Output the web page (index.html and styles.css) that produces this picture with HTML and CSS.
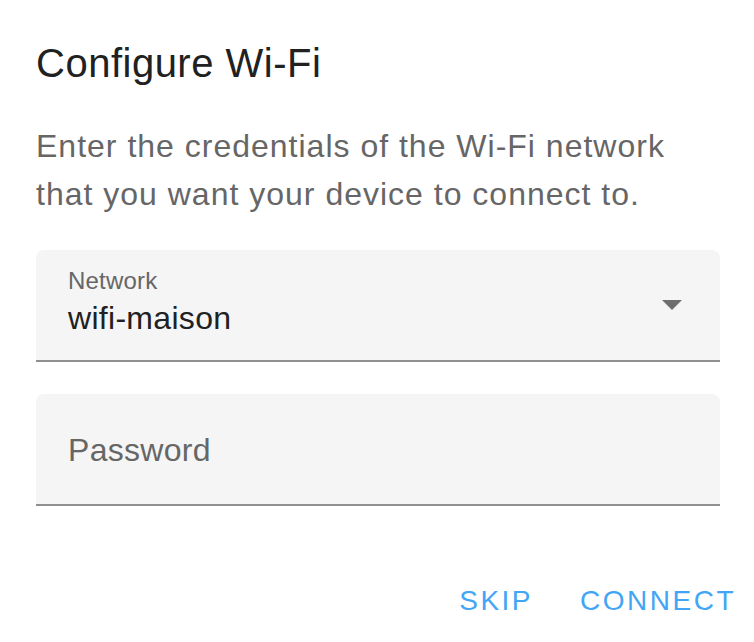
FILE: index.html
```html
<!DOCTYPE html>
<html lang="en">
<head>
<meta charset="utf-8">
<title>Configure Wi-Fi</title>
<link rel="stylesheet" href="styles.css">
</head>
<body>
<div class="dialog">
  <div class="content">
    <h2 class="title">Configure Wi-Fi</h2>
    <p class="description">Enter the credentials of the Wi-Fi network that you want your device to connect to.</p>
    <div class="field field-select">
      <div class="field-text">
        <span class="field-label">Network</span>
        <span class="field-value">wifi-maison</span>
      </div>
      <svg class="dropdown-icon" width="20" height="10" viewBox="0 0 20 10" aria-hidden="true">
        <polygon points="0,0 20,0 10,10" fill="#6e6e6e"/>
      </svg>
    </div>
    <div class="field field-input">
      <span class="field-placeholder">Password</span>
    </div>
  </div>
  <div class="actions">
    <button class="action-button">Skip</button>
    <button class="action-button">Connect</button>
  </div>
</div>
</body>
</html>
```

FILE: styles.css
```css
html, body {
  margin: 0;
  padding: 0;
  background: #ffffff;
}

body {
  font-family: "Liberation Sans", Arial, Helvetica, sans-serif;
  overflow: hidden;
}

.dialog {
  padding-top: 31px;
}

.content {
  padding: 0 34px 0 36px;
}

.title {
  margin: 0;
  font-size: 40px;
  line-height: 64px;
  font-weight: 400;
  letter-spacing: 0.5px;
  color: #212121;
}

.description {
  margin: 27px 0 0;
  font-size: 32px;
  line-height: 48px;
  letter-spacing: 1px;
  color: #666666;
}

.field {
  box-sizing: border-box;
  height: 112px;
  background: #f5f5f5;
  border-radius: 8px 8px 0 0;
  border-bottom: 2px solid #8f8f8f;
  padding-left: 32px;
}

.field-select {
  margin-top: 32px;
  display: flex;
  align-items: center;
  padding-right: 38px;
}

.field-text {
  flex: 1;
  display: flex;
  flex-direction: column;
  align-self: flex-start;
  padding-top: 19px;
}

.field-label {
  font-size: 24px;
  line-height: 24px;
  letter-spacing: 0.2px;
  color: #666666;
}

.field-value {
  margin-top: 9px;
  font-size: 32px;
  line-height: 32px;
  letter-spacing: 0.3px;
  color: #212121;
}

.dropdown-icon {
  display: block;
  flex: none;
}

.field-input {
  margin-top: 32px;
  padding-top: 40px;
}

.field-placeholder {
  display: block;
  font-size: 32px;
  line-height: 32px;
  letter-spacing: 0.3px;
  color: #666666;
}

.actions {
  display: flex;
  justify-content: flex-end;
  gap: 15px;
  margin-top: 59px;
  padding-right: 2px;
}

.action-button {
  font-family: "Liberation Sans", Arial, Helvetica, sans-serif;
  font-size: 28px;
  line-height: 72px;
  height: 72px;
  padding: 0 16px;
  margin: 0;
  border: 0;
  background: transparent;
  color: #42a5f5;
  text-transform: uppercase;
  letter-spacing: 2.5px;
  font-weight: 400;
  cursor: pointer;
}
```
